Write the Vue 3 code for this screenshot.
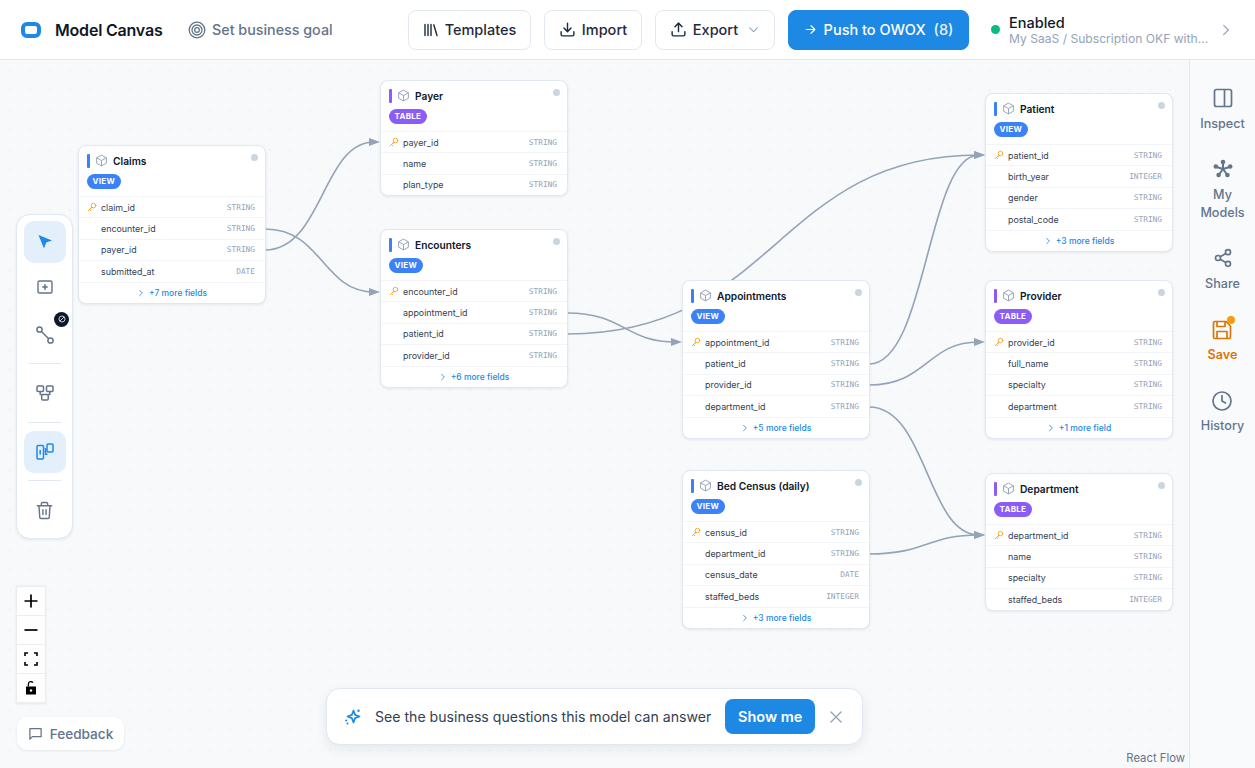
<script setup>
const nodes = [
  { name: 'Claims', kind: 'VIEW', x: 78, y: 145, more: '+7 more fields', fields: [['claim_id', 'STRING', 1], ['encounter_id', 'STRING'], ['payer_id', 'STRING'], ['submitted_at', 'DATE']] },
  { name: 'Payer', kind: 'TABLE', x: 380, y: 80, fields: [['payer_id', 'STRING', 1], ['name', 'STRING'], ['plan_type', 'STRING']] },
  { name: 'Encounters', kind: 'VIEW', x: 380, y: 229, more: '+6 more fields', fields: [['encounter_id', 'STRING', 1], ['appointment_id', 'STRING'], ['patient_id', 'STRING'], ['provider_id', 'STRING']] },
  { name: 'Appointments', kind: 'VIEW', x: 682, y: 280, more: '+5 more fields', fields: [['appointment_id', 'STRING', 1], ['patient_id', 'STRING'], ['provider_id', 'STRING'], ['department_id', 'STRING']] },
  { name: 'Bed Census (daily)', kind: 'VIEW', x: 682, y: 470, more: '+3 more fields', fields: [['census_id', 'STRING', 1], ['department_id', 'STRING'], ['census_date', 'DATE'], ['staffed_beds', 'INTEGER']] },
  { name: 'Patient', kind: 'VIEW', x: 985, y: 93, more: '+3 more fields', fields: [['patient_id', 'STRING', 1], ['birth_year', 'INTEGER'], ['gender', 'STRING'], ['postal_code', 'STRING']] },
  { name: 'Provider', kind: 'TABLE', x: 985, y: 280, more: '+1 more field', fields: [['provider_id', 'STRING', 1], ['full_name', 'STRING'], ['specialty', 'STRING'], ['department', 'STRING']] },
  { name: 'Department', kind: 'TABLE', x: 985, y: 473, fields: [['department_id', 'STRING', 1], ['name', 'STRING'], ['specialty', 'STRING'], ['staffed_beds', 'INTEGER']] }
]

// canvas starts 60px below the top of the page
const links = [
  [265, 229, 380, 292],
  [265, 250, 380, 142],
  [567, 313, 682, 342],
  [567, 334, 985, 155],
  [869, 364, 985, 155],
  [869, 385, 985, 342],
  [869, 407, 985, 535],
  [869, 554, 985, 535]
]

function edgePath(l) {
  const y1 = l[1] - 60
  const y2 = l[3] - 60
  const mid = (l[0] + l[2]) / 2
  return `M${l[0]} ${y1} C${mid} ${y1} ${mid} ${y2} ${l[2] - 6} ${y2}`
}

function arrowPoints(l) {
  const y = l[3] - 60
  return `${l[2] - 11},${y - 4} ${l[2]},${y} ${l[2] - 11},${y + 4}`
}
</script>

<template>
  <div class="page">
    <header class="topbar">
      <div class="brand">
        <span class="logo"></span>
        <span class="brand-name">Model Canvas</span>
      </div>
      <div class="goal">
        <svg width="18" height="18" viewBox="0 0 18 18" fill="none" stroke="#64748b" stroke-width="1.3">
          <circle cx="9" cy="9" r="7.8" /><circle cx="9" cy="9" r="5" /><circle cx="9" cy="9" r="2.3" />
        </svg>
        <span>Set business goal</span>
      </div>
      <div class="actions">
        <button class="btn btn-templates">
          <svg width="16" height="16" viewBox="0 0 16 16" fill="none" stroke="#1e293b" stroke-width="1.4" stroke-linecap="round">
            <path d="M2 2.5v11M5 2.5v11M8 2.5v11M10.8 2.8l3.2 10.7" />
          </svg>
          Templates
        </button>
        <button class="btn btn-import">
          <svg width="17" height="17" viewBox="0 0 24 24" fill="none" stroke="#1e293b" stroke-width="2" stroke-linecap="round" stroke-linejoin="round">
            <path d="M21 15v4a2 2 0 0 1-2 2H5a2 2 0 0 1-2-2v-4M7 10l5 5 5-5M12 15V3" />
          </svg>
          Import
        </button>
        <button class="btn btn-export">
          <svg width="17" height="17" viewBox="0 0 24 24" fill="none" stroke="#1e293b" stroke-width="2" stroke-linecap="round" stroke-linejoin="round">
            <path d="M21 15v4a2 2 0 0 1-2 2H5a2 2 0 0 1-2-2v-4M17 8l-5-5-5 5M12 3v12" />
          </svg>
          Export
          <svg class="caret" width="13" height="13" viewBox="0 0 24 24" fill="none" stroke="#94a3b8" stroke-width="2" stroke-linecap="round" stroke-linejoin="round">
            <path d="M5 9l7 7 7-7" />
          </svg>
        </button>
        <button class="btn btn-push">
          <svg width="13" height="13" viewBox="0 0 24 24" fill="none" stroke="#fff" stroke-width="2.2" stroke-linecap="round" stroke-linejoin="round">
            <path d="M4 12h16M13 5l7 7-7 7" />
          </svg>
          <span>Push to OWOX</span><span class="count">(8)</span>
        </button>
      </div>
      <div class="status">
        <span class="status-dot"></span>
        <div class="status-text">
          <div class="status-title">Enabled</div>
          <div class="status-sub">My SaaS / Subscription OKF with...</div>
        </div>
        <svg width="14" height="14" viewBox="0 0 24 24" fill="none" stroke="#94a3b8" stroke-width="2" stroke-linecap="round" stroke-linejoin="round">
          <path d="M8 4l8 8-8 8" />
        </svg>
      </div>
    </header>

    <div class="body">
      <main class="canvas">
        <svg class="edges" width="1189" height="708">
          <g v-for="(l, i) in links" :key="i">
            <path :d="edgePath(l)" fill="none" stroke="#94a3b8" stroke-width="1.6" />
            <polygon :points="arrowPoints(l)" fill="#94a3b8" />
          </g>
        </svg>

        <div
          v-for="n in nodes"
          :key="n.name"
          class="node"
          :style="{ left: n.x + 'px', top: (n.y - 60) + 'px' }"
        >
          <div class="node-head">
            <div class="node-title">
              <span class="bar" :class="n.kind.toLowerCase()"></span>
              <svg width="13" height="13" viewBox="0 0 24 24" fill="none" stroke="#94a3b8" stroke-width="1.8" stroke-linejoin="round">
                <path d="M12 2l9 5v10l-9 5-9-5V7z" /><path d="M3 7l9 5 9-5M12 12v10" />
              </svg>
              <span class="name">{{ n.name }}</span>
              <span class="node-dot"></span>
            </div>
            <span class="badge" :class="n.kind.toLowerCase()">{{ n.kind }}</span>
          </div>
          <div v-for="f in n.fields" :key="f[0]" class="field">
            <span class="key">
              <svg v-if="f[2]" width="10" height="10" viewBox="0 0 24 24" fill="none" stroke="#f5a524" stroke-width="2.2" stroke-linecap="round" stroke-linejoin="round">
                <circle cx="15.5" cy="8.5" r="5.5" /><path d="M11.5 12.5L3 21M6 18l3 3M9 15l2 2" />
              </svg>
            </span>
            <span class="field-name">{{ f[0] }}</span>
            <span class="field-type">{{ f[1] }}</span>
          </div>
          <div v-if="n.more" class="more">
            <svg width="8" height="8" viewBox="0 0 24 24" fill="none" stroke="#1e88e5" stroke-width="2.5" stroke-linecap="round" stroke-linejoin="round">
              <path d="M8 4l8 8-8 8" />
            </svg>
            {{ n.more }}
          </div>
        </div>

        <div class="tools">
          <div class="tool active">
            <svg width="16" height="16" viewBox="0 0 16 16" fill="#1e88e5"><path d="M1.5 1l13.5 5.4-5.8 2.2-2.2 5.9z" /></svg>
          </div>
          <div class="tool add">
            <svg width="16" height="16" viewBox="0 0 16 16" fill="none" stroke="#64748b" stroke-width="1.4" stroke-linecap="round">
              <rect x="1" y="2" width="14" height="12" rx="1.5" /><path d="M8 5.8v4.4M5.8 8h4.4" stroke-width="1.6" />
            </svg>
          </div>
          <div class="tool link">
            <svg width="18" height="18" viewBox="0 0 18 18" fill="none" stroke="#64748b" stroke-width="1.5">
              <circle cx="3.5" cy="3.5" r="2.6" /><circle cx="14.5" cy="14.5" r="2.6" /><path d="M5.5 5.5l7 7" />
            </svg>
            <span class="blocked">
              <svg width="8" height="8" viewBox="0 0 10 10" fill="none" stroke="#cbd5e1" stroke-width="1.2">
                <circle cx="5" cy="5" r="3.8" /><path d="M2.5 7.5l5-5" />
              </svg>
            </span>
          </div>
          <div class="divider"></div>
          <div class="tool group">
            <svg width="18" height="18" viewBox="0 0 18 18" fill="none" stroke="#64748b" stroke-width="1.5" stroke-linejoin="round">
              <rect x="1" y="2" width="6.5" height="5.5" rx="1" /><rect x="10.5" y="2" width="6.5" height="5.5" rx="1" /><rect x="5.7" y="10.5" width="6.5" height="5.5" rx="1" />
              <path d="M4.2 7.5v3h1.5M13.8 7.5v3h-1.6" />
            </svg>
          </div>
          <div class="divider"></div>
          <div class="tool active layout">
            <svg width="18" height="18" viewBox="0 0 18 18" fill="none" stroke="#1e88e5" stroke-width="1.5" stroke-linejoin="round">
              <rect x="1" y="2.5" width="6.5" height="13.5" rx="1" /><rect x="11" y="1" width="6" height="8" rx="1" />
              <path d="M4.2 7v4.5" /><path d="M9.5 5v6.2h2" />
            </svg>
          </div>
          <div class="divider"></div>
          <div class="tool trash">
            <svg width="19" height="19" viewBox="0 0 24 24" fill="none" stroke="#64748b" stroke-width="1.8" stroke-linecap="round" stroke-linejoin="round">
              <path d="M3 6h18M8 6V3.5A1.5 1.5 0 0 1 9.5 2h5A1.5 1.5 0 0 1 16 3.5V6M5 6l1 14.5A1.5 1.5 0 0 0 7.5 22h9a1.5 1.5 0 0 0 1.5-1.5L19 6M10 11v6M14 11v6" />
            </svg>
          </div>
        </div>

        <div class="zoom">
          <div class="zoom-btn">
            <svg width="14" height="14" viewBox="0 0 14 14" fill="none" stroke="#000" stroke-width="1.7"><path d="M7 0.5v13M0.5 7h13" /></svg>
          </div>
          <div class="zoom-btn">
            <svg width="14" height="14" viewBox="0 0 14 14" fill="none" stroke="#000" stroke-width="1.7"><path d="M0.5 7h13" /></svg>
          </div>
          <div class="zoom-btn">
            <svg width="14" height="14" viewBox="0 0 14 14" fill="none" stroke="#000" stroke-width="1.6"><path d="M1 4V1h3M10 1h3v3M13 10v3h-3M4 13H1v-3" /></svg>
          </div>
          <div class="zoom-btn">
            <svg width="14" height="14" viewBox="0 0 14 14"><path d="M2 5.5h10v8H2z" fill="#000" /><path d="M4.4 5.5V3a2.4 2.4 0 0 1 4.5-1.2" fill="none" stroke="#000" stroke-width="1.3" /><circle cx="7" cy="9.5" r="1.2" fill="#fff" /></svg>
          </div>
        </div>

        <div class="feedback">
          <svg width="15" height="15" viewBox="0 0 24 24" fill="none" stroke="#64748b" stroke-width="2" stroke-linejoin="round">
            <path d="M21 4H3v17l4-4h14z" />
          </svg>
          Feedback
        </div>

        <div class="banner">
          <svg width="18" height="18" viewBox="0 0 18 18" fill="none" stroke="#1e88e5" stroke-width="1.7" stroke-linejoin="round">
            <path d="M9.5 2.5l1.6 4.4 4.4 1.6-4.4 1.6-1.6 4.4-1.6-4.4-4.4-1.6 4.4-1.6z" />
            <circle cx="14.5" cy="2.8" r="1.2" fill="#1e88e5" stroke="none" /><circle cx="2.2" cy="12.5" r="1.1" fill="#1e88e5" stroke="none" /><circle cx="3.5" cy="15.5" r="1" fill="#1e88e5" stroke="none" />
          </svg>
          <span class="banner-text">See the business questions this model can answer</span>
          <button class="show-me">Show me</button>
          <svg class="close" width="12" height="12" viewBox="0 0 12 12" fill="none" stroke="#94a3b8" stroke-width="1.4" stroke-linecap="round"><path d="M1 1l10 10M11 1L1 11" /></svg>
        </div>

        <div class="attribution">React Flow</div>
      </main>

      <aside class="sidebar">
        <div class="side-item">
          <svg width="20" height="20" viewBox="0 0 20 20" fill="none" stroke="#64748b" stroke-width="1.7">
            <rect x="1.5" y="1.5" width="17" height="17" rx="2" /><path d="M11.5 1.5v17" />
          </svg>
          <span>Inspect</span>
        </div>
        <div class="side-item">
          <svg width="20" height="20" viewBox="0 0 20 20" fill="#64748b" stroke="#64748b">
            <path d="M10 10V3M10 10L3.5 8M10 10l6.5-2M10 10l-4 5.5M10 10l4 5.5" stroke-width="2" />
            <circle cx="10" cy="3" r="2.3" stroke="none" /><circle cx="2.8" cy="7.5" r="2.3" stroke="none" /><circle cx="17.2" cy="7.5" r="2.3" stroke="none" /><circle cx="5.6" cy="16" r="2.3" stroke="none" /><circle cx="14.4" cy="16" r="2.3" stroke="none" />
          </svg>
          <span>My<br />Models</span>
        </div>
        <div class="side-item">
          <svg width="20" height="20" viewBox="0 0 24 24" fill="none" stroke="#64748b" stroke-width="2">
            <circle cx="18" cy="5" r="3" /><circle cx="6" cy="12" r="3" /><circle cx="18" cy="19" r="3" /><path d="M8.6 13.5l6.8 4M15.4 6.5l-6.8 4" />
          </svg>
          <span>Share</span>
        </div>
        <div class="side-item save">
          <svg width="20" height="20" viewBox="0 0 20 20" fill="none" stroke="#d97706" stroke-width="1.7" stroke-linejoin="round">
            <path d="M1.5 3a1.5 1.5 0 0 1 1.5-1.5h11l4.5 4.5v11a1.5 1.5 0 0 1-1.5 1.5H3A1.5 1.5 0 0 1 1.5 17z" />
            <path d="M5 1.5v5h8v-5M5 18.5v-7h10v7" />
          </svg>
          <span class="save-dot"></span>
          <span>Save</span>
        </div>
        <div class="side-item">
          <svg width="20" height="20" viewBox="0 0 20 20" fill="none" stroke="#64748b" stroke-width="1.7" stroke-linecap="round" stroke-linejoin="round">
            <circle cx="10" cy="10" r="9" /><path d="M10 4.5V10l3.5 2" />
          </svg>
          <span>History</span>
        </div>
      </aside>
    </div>
  </div>
</template>

<style>
html, body {
  margin: 0;
  overflow: hidden;
}
</style>

<style scoped>
.page {
  width: 1255px;
  height: 768px;
  display: flex;
  flex-direction: column;
  font-family: Inter, "Liberation Sans", sans-serif;
  overflow: hidden;
}
.topbar {
  height: 60px;
  box-sizing: border-box;
  flex: none;
  display: flex;
  align-items: center;
  background: #fff;
  border-bottom: 1px solid #e2e8f0;
}
.brand {
  display: flex;
  align-items: center;
  margin-left: 21px;
  width: 167px;
}
.logo {
  width: 20px;
  height: 16px;
  box-sizing: border-box;
  border: 4px solid #1e88e5;
  border-radius: 6px;
  margin-right: 14px;
}
.brand-name {
  font-size: 16px;
  font-weight: 600;
  color: #0f172a;
  letter-spacing: -0.2px;
}
.goal {
  display: flex;
  align-items: center;
  gap: 6px;
  font-size: 14.3px;
  font-weight: 500;
  color: #64748b;
  width: 220px;
}
.actions {
  display: flex;
  gap: 13px;
  align-items: center;
}
.btn {
  height: 40px;
  box-sizing: border-box;
  display: flex;
  align-items: center;
  justify-content: center;
  gap: 6px;
  border: 1px solid #e2e8f0;
  border-radius: 8px;
  background: #fff;
  font: 500 14.5px Inter, "Liberation Sans", sans-serif;
  color: #1e293b;
  padding: 0;
}
.btn-templates { width: 123px; }
.btn-import { width: 98px; }
.btn-export { width: 120px; }
.caret { margin-left: 3px; }
.btn-push {
  width: 181px;
  background: #1e88e5;
  border-color: #1e88e5;
  color: #fff;
  gap: 7px;
}
.count { margin-left: 1px; opacity: 0.9; }
.status {
  display: flex;
  align-items: center;
  margin-left: 22px;
}
.status-dot {
  width: 9px;
  height: 9px;
  border-radius: 50%;
  background: #10b981;
  margin-right: 9px;
}
.status-text {
  width: 210px;
  padding-top: 2px;
}
.status-title {
  font-size: 14.5px;
  font-weight: 500;
  color: #0f172a;
  line-height: 17px;
}
.status-sub {
  font-size: 12.1px;
  color: #94a3b8;
  line-height: 16px;
  white-space: nowrap;
}
.body {
  flex: 1;
  display: flex;
  min-height: 0;
}
.canvas {
  position: relative;
  flex: 1;
  background-color: #f8f9fb;
  background-image: radial-gradient(#eff2f6 1px, transparent 1px);
  background-size: 20px 20px;
}
.edges {
  position: absolute;
  left: 0;
  top: 0;
}
.node {
  position: absolute;
  width: 188px;
  box-sizing: border-box;
  background: #fff;
  border: 1px solid #e2e8f0;
  border-radius: 8px;
  box-shadow: 0 1px 3px rgba(15, 23, 42, 0.08);
}
.node-head {
  height: 50px;
  box-sizing: border-box;
  padding: 7px 8px 0;
}
.node-title {
  display: flex;
  align-items: center;
  height: 15px;
}
.bar {
  width: 3px;
  height: 14px;
  border-radius: 1px;
  margin-right: 5px;
}
.bar.view { background: #3b82f6; }
.bar.table { background: #8b5cf6; }
.name {
  font-size: 10.2px;
  font-weight: 600;
  color: #0f172a;
  margin-left: 5px;
}
.node-dot {
  width: 7px;
  height: 7px;
  border-radius: 50%;
  background: #cbd5e1;
  margin-left: auto;
  margin-right: -1px;
  margin-top: -6px;
}
.badge {
  display: inline-block;
  margin-top: 6px;
  height: 15px;
  line-height: 15px;
  padding: 0 5.5px;
  border-radius: 8px;
  font-size: 8px;
  font-weight: 700;
  letter-spacing: 0.3px;
  color: #fff;
}
.badge.view { background: #3b82f6; }
.badge.table { background: #8b5cf6; }
.field {
  height: 21.4px;
  box-sizing: border-box;
  display: flex;
  align-items: center;
  border-top: 1px solid #f1f5f9;
  padding: 0 10px 0 8px;
}
.key {
  width: 14px;
  display: flex;
  align-items: center;
}
.field-name {
  font-size: 8.9px;
  color: #334155;
}
.field-type {
  margin-left: auto;
  font-family: "DejaVu Sans Mono", monospace;
  font-size: 7.8px;
  color: #94a3b8;
}
.more {
  height: 21.4px;
  box-sizing: border-box;
  border-top: 1px solid #f1f5f9;
  display: flex;
  align-items: center;
  justify-content: center;
  gap: 4px;
  font-size: 8.5px;
  font-weight: 500;
  color: #1e88e5;
}
.tools {
  position: absolute;
  left: 16px;
  top: 154px;
  width: 57px;
  height: 325px;
  box-sizing: border-box;
  background: #fff;
  border: 1.5px solid #e2e8f0;
  border-radius: 14px;
  box-shadow: 0 1px 3px rgba(15, 23, 42, 0.08);
  display: flex;
  flex-direction: column;
  align-items: center;
  padding-top: 6px;
}
.tool {
  position: relative;
  width: 42px;
  height: 42px;
  flex: none;
  border-radius: 10px;
  display: flex;
  align-items: center;
  justify-content: center;
}
.tool.active { background: #e3f0fc; }
.tool.add { margin-top: 3px; }
.tool.link { margin-top: 6px; }
.blocked {
  position: absolute;
  right: -3.5px;
  top: -2.5px;
  width: 15px;
  height: 15px;
  border-radius: 50%;
  background: #0f172a;
  display: flex;
  align-items: center;
  justify-content: center;
}
.divider {
  width: 33px;
  height: 1px;
  flex: none;
  background: #e2e8f0;
  margin: 7px 0;
}
.tool.group { margin: 1px 0; }
.tool.layout { margin-top: 1px; }
.tool.trash { margin-top: 1px; }
.zoom {
  position: absolute;
  left: 17px;
  top: 527px;
  width: 28px;
  box-shadow: 0 0 2px 1px rgba(0, 0, 0, 0.08);
}
.zoom-btn {
  height: 29px;
  box-sizing: border-box;
  display: flex;
  align-items: center;
  justify-content: center;
  background: #fefefe;
  border-bottom: 1px solid #eee;
}
.feedback {
  position: absolute;
  left: 17px;
  top: 657px;
  width: 107px;
  height: 33px;
  box-sizing: border-box;
  border-radius: 10px;
  background: #fff;
  box-shadow: 0 1px 3px rgba(15, 23, 42, 0.08);
  display: flex;
  align-items: center;
  justify-content: center;
  gap: 7px;
  font-size: 13.6px;
  font-weight: 500;
  color: #64748b;
}
.banner {
  position: absolute;
  left: 326px;
  top: 628px;
  width: 537px;
  height: 57px;
  box-sizing: border-box;
  background: #fff;
  border: 1px solid #e2e8f0;
  border-radius: 14px;
  box-shadow: 0 4px 12px rgba(15, 23, 42, 0.08);
  display: flex;
  align-items: center;
  padding-left: 17px;
}
.banner-text {
  margin-left: 13px;
  font-size: 14.1px;
  color: #334155;
}
.show-me {
  margin-left: 14px;
  width: 90px;
  height: 35px;
  border: none;
  border-radius: 8px;
  background: #1e88e5;
  color: #fff;
  font: 600 14.5px Inter, "Liberation Sans", sans-serif;
}
.close { margin-left: 15px; }
.attribution {
  position: absolute;
  right: 4px;
  bottom: 3px;
  font-size: 11.3px;
  color: #64748b;
}
.sidebar {
  width: 66px;
  flex: none;
  box-sizing: border-box;
  background: #f8fafc;
  border-left: 1px solid #e2e8f0;
  display: flex;
  flex-direction: column;
  align-items: center;
  padding-top: 28px;
  gap: 26.7px;
}
.side-item {
  position: relative;
  display: flex;
  flex-direction: column;
  align-items: center;
  gap: 6.5px;
  font-size: 12.6px;
  font-weight: 500;
  line-height: 18px;
  color: #64748b;
  text-align: center;
}
.side-item.save { color: #d97706; font-weight: 600; }
.save-dot {
  position: absolute;
  right: 2px;
  top: -4px;
  width: 8px;
  height: 8px;
  border-radius: 50%;
  background: #f59e0b;
}
</style>
